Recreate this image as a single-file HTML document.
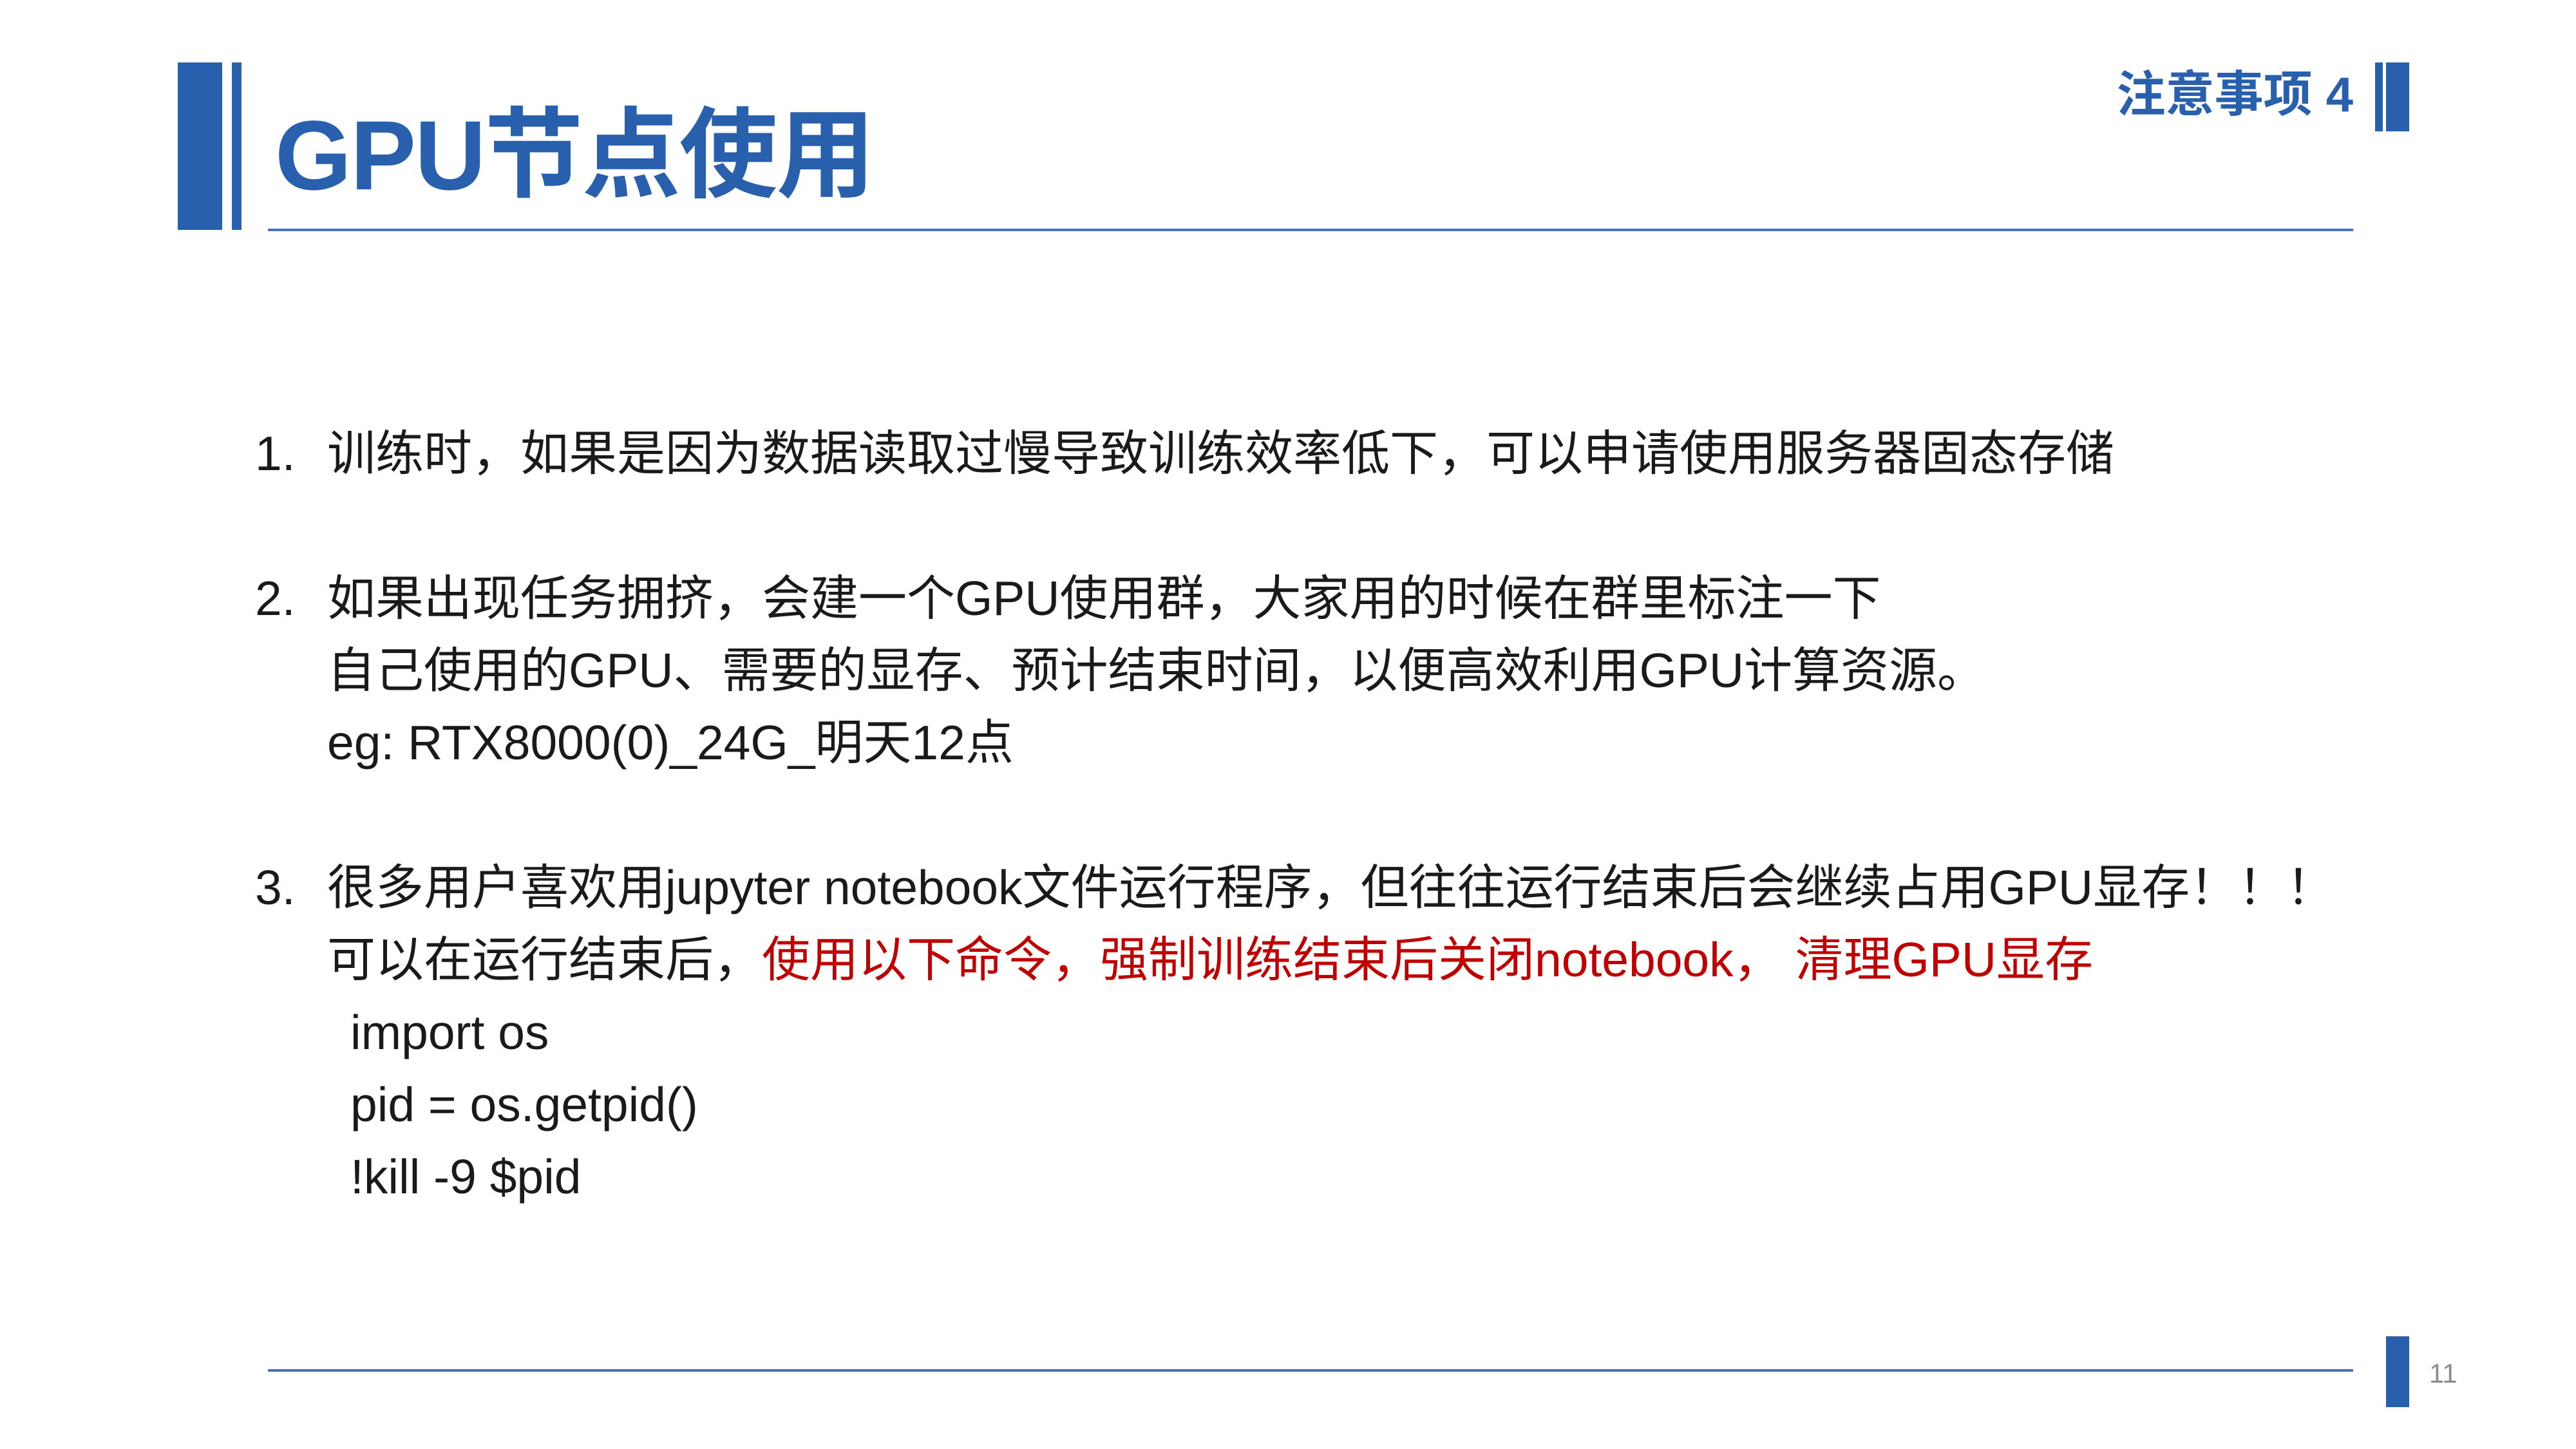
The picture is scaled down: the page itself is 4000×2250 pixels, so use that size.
<!DOCTYPE html>
<html><head><meta charset="utf-8"><style>
html,body{margin:0;padding:0;background:#fff;}
body{width:4000px;height:2250px;position:relative;overflow:hidden;font-family:"Liberation Sans","Noto Sans CJK SC",sans-serif;}
.a{position:absolute;}
.b{background:#2860AE;}
.l{position:absolute;height:100px;line-height:100px;font-size:75px;color:#1a1a1a;white-space:nowrap;}
.r{color:#C00000;}
</style></head><body>
<div class="a b" style="left:276px;top:97px;width:69px;height:260px"></div>
<div class="a b" style="left:360px;top:97px;width:15px;height:260px"></div>
<div class="a" style="left:416px;top:355px;width:3238px;height:4px;background:#4472C4"></div>
<div class="a" style="left:427px;top:132px;font-size:153px;font-weight:bold;color:#2860AE;line-height:220px;letter-spacing:-2px">GPU节点使用</div>
<div class="a" style="right:346px;top:98px;font-size:76px;font-weight:bold;color:#2860AE;line-height:100px;text-align:right">注意事项 4</div>
<div class="a b" style="left:3688px;top:97px;width:12px;height:107px"></div>
<div class="a b" style="left:3705px;top:97px;width:36px;height:107px"></div>
<div class="a" style="left:416px;top:2126px;width:3238px;height:4px;background:#4472C4"></div>
<div class="a b" style="left:3705px;top:2075px;width:36px;height:110px"></div>
<div class="a" style="left:3772px;top:2103px;font-size:42px;color:#8c8c8c;line-height:60px">11</div>

<div class="l" style="left:396px;top:654px">1.</div>
<div class="l" style="left:508px;top:654px">训练时，如果是因为数据读取过慢导致训练效率低下，可以申请使用服务器固态存储</div>
<div class="l" style="left:396px;top:879px">2.</div>
<div class="l" style="left:508px;top:879px">如果出现任务拥挤，会建一个GPU使用群，大家用的时候在群里标注一下</div>
<div class="l" style="left:508px;top:991px">自己使用的GPU、需要的显存、预计结束时间，以便高效利用GPU计算资源。</div>
<div class="l" style="left:508px;top:1103px">eg: RTX8000(0)_24G_明天12点</div>
<div class="l" style="left:396px;top:1328px">3.</div>
<div class="l" style="left:508px;top:1328px">很多用户喜欢用jupyter notebook文件运行程序，但往往运行结束后会继续占用GPU显存！！！</div>
<div class="l" style="left:508px;top:1440px">可以在运行结束后，<span class="r">使用以下命令，强制训练结束后关闭notebook， 清理GPU显存</span></div>
<div class="l" style="left:544px;top:1553px">import os</div>
<div class="l" style="left:544px;top:1665px">pid = os.getpid()</div>
<div class="l" style="left:544px;top:1777px">!kill -9 $pid</div>
</body></html>
